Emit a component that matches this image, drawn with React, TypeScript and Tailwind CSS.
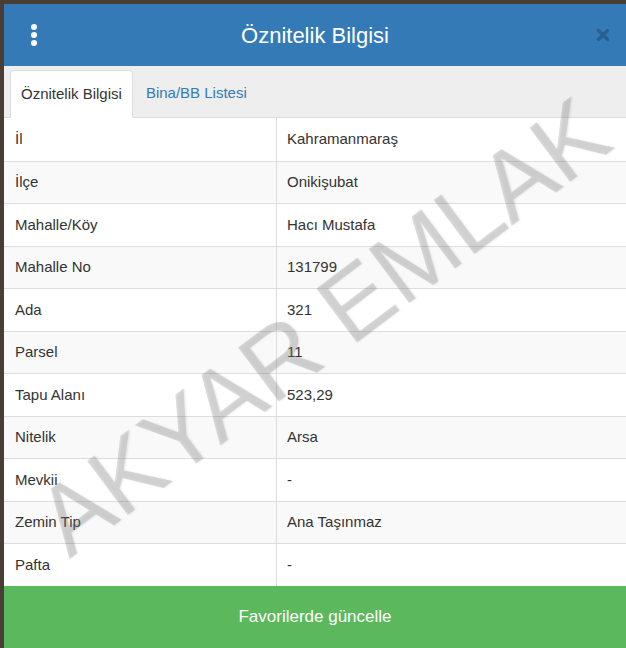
import { X } from "lucide-react";

const ROWS: [string, string][] = [
  ["İl", "Kahramanmaraş"],
  ["İlçe", "Onikişubat"],
  ["Mahalle/Köy", "Hacı Mustafa"],
  ["Mahalle No", "131799"],
  ["Ada", "321"],
  ["Parsel", "11"],
  ["Tapu Alanı", "523,29"],
  ["Nitelik", "Arsa"],
  ["Mevkii", "-"],
  ["Zemin Tip", "Ana Taşınmaz"],
  ["Pafta", "-"],
];

export default function App() {
  return (
    <div
      className="relative w-[626px] h-[648px] overflow-hidden bg-[#4a3d33] pt-[4px] pl-[4px]"
      style={{ fontFamily: '"Liberation Sans", Arial, sans-serif' }}
    >
      <div className="flex flex-col w-[622px] h-[644px] bg-white">
        {/* header */}
        <div className="flex items-center h-[62px] bg-[#337ab7] text-white shrink-0">
          <div className="w-[60px] flex flex-col items-center gap-[2px]">
            <span className="w-[6px] h-[6px] rounded-full bg-white" />
            <span className="w-[6px] h-[6px] rounded-full bg-white" />
            <span className="w-[6px] h-[6px] rounded-full bg-white" />
          </div>
          <div className="flex-1 text-center text-[22px]">Öznitelik Bilgisi</div>
          <div className="w-[60px] flex justify-center pl-[14px]">
            <X size={18} strokeWidth={4.5} className="text-[#2a5f8f]" />
          </div>
        </div>

        {/* tabs */}
        <div className="flex items-end h-[52px] bg-[#eeeeee] border-b border-[#dddddd] pl-[6px] shrink-0 text-[15px]">
          <div className="h-[48px] -mb-px flex items-center px-[10px] bg-white border border-[#dddddd] border-b-white rounded-t-[4px] text-[#333333]">
            Öznitelik Bilgisi
          </div>
          <div className="h-[48px] flex items-center px-[13px] text-[#337ab7]">Bina/BB Listesi</div>
        </div>

        {/* table */}
        <div className="flex flex-col flex-1 text-[15px] text-[#333333]">
          {ROWS.map(([k, v], i) => (
            <div
              key={k}
              className={`flex h-[42.5px] items-center ${i > 0 ? "border-t border-[#dddddd]" : ""} ${
                i % 2 === 1 ? "bg-[#f9f9f9]" : "bg-white"
              }`}
            >
              <div className="w-[273px] h-full flex items-center pl-[11px] border-r border-[#dddddd]">{k}</div>
              <div className="flex-1 pl-[10px]">{v}</div>
            </div>
          ))}
        </div>

        {/* button */}
        <div className="h-[62px] shrink-0 bg-[#5cb85c] text-white text-[17px] flex items-center justify-center">
          Favorilerde güncelle
        </div>
      </div>

      {/* watermark */}
      <div className="absolute left-[322px] top-[326px] -translate-x-1/2 -translate-y-1/2 -rotate-[37deg] whitespace-nowrap text-[98px] leading-none text-[rgba(140,140,140,0.28)] pointer-events-none [text-shadow:1px_1px_2px_rgba(0,0,0,0.08)]">
        AKYAR EMLAK
      </div>
    </div>
  );
}
